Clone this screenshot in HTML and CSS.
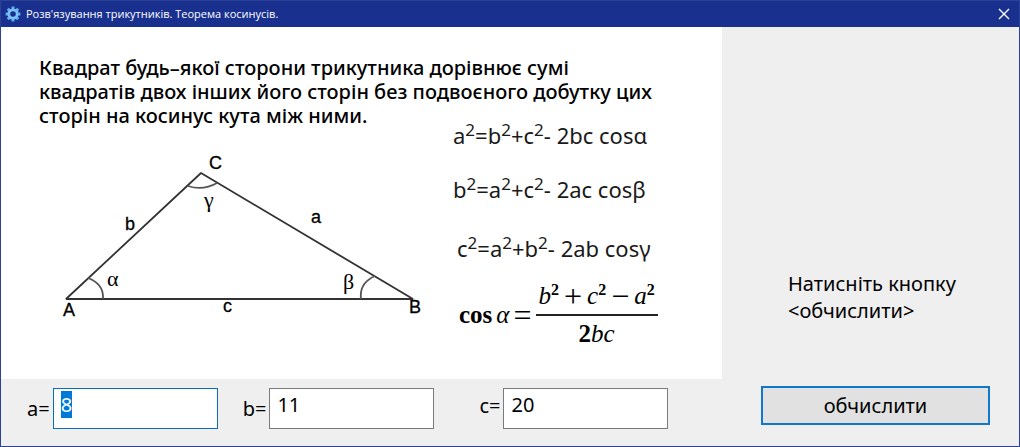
FILE: index.html
```html
<!DOCTYPE html>
<html lang="uk">
<head>
<meta charset="utf-8">
<title>Розв'язування трикутників. Теорема косинусів.</title>
<link rel="stylesheet" href="styles.css">
</head>
<body>
<div class="window">
  <header class="titlebar">
    <svg class="gear" viewBox="0 0 16 16" aria-hidden="true">
      <path d="M8 .6v2.6M8 12.8v2.6M.6 8h2.6M12.8 8h2.6M2.8 2.8l1.8 1.8M11.4 11.4l1.8 1.8M2.8 13.2l1.8-1.8M11.4 4.6l1.8-1.8" stroke="#5aaef0" stroke-width="3"/>
      <circle cx="8" cy="8" r="4.2" fill="none" stroke="#7cc0f5" stroke-width="2.8"/>
    </svg>
    <h1 class="title">Розв'язування трикутників. Теорема косинусів.</h1>
    <button class="close" type="button" aria-label="Закрити">
      <svg viewBox="0 0 10 10" aria-hidden="true"><path d="M0 0L10 10M10 0L0 10" stroke="#fff" stroke-width="1.4"/></svg>
    </button>
  </header>
  <form class="content">
    <main class="main">
      <section class="theory">
        <p class="theorem">Квадрат будь–якої сторони трикутника дорівнює сумі<br>квадратів двох інших його сторін без подвоєного добутку цих<br>сторін на косинус кута між ними.</p>
        <div class="columns">
          <svg class="triangle" viewBox="0 0 370 180" role="img" aria-label="Трикутник ABC">
            <g fill="none" stroke="#333" stroke-width="1.8">
              <path d="M6 151L141 25L353 151Z" stroke-linejoin="bevel"/>
              <path d="M28 130Q44 136 43 151M128 38Q143 43 157 35M315 128Q299 135 301 151" stroke="#555"/>
            </g>
            <g class="names">
              <text x="3" y="168">A</text>
              <text x="149" y="21">C</text>
              <text x="349" y="165">B</text>
              <text x="251" y="75">a</text>
              <text x="65" y="82">b</text>
              <text x="163" y="164">c</text>
            </g>
            <g class="angles">
              <text x="47" y="138">α</text>
              <text x="283" y="141">β</text>
              <text x="144" y="59">γ</text>
            </g>
          </svg>
          <div class="formulas">
            <p>a<sup>2</sup>=b<sup>2</sup>+c<sup>2</sup>- 2bc cosα</p>
            <p>b<sup>2</sup>=a<sup>2</sup>+c<sup>2</sup>- 2ac cosβ</p>
            <p class="third">c<sup>2</sup>=a<sup>2</sup>+b<sup>2</sup>- 2ab cosγ</p>
            <div class="cosine">
              <b>cos</b> <i>α</i> <span class="sign">=</span>
              <span class="fraction">
                <span class="top"><span><i>b</i><sup>2</sup></span> <span class="sign">+</span> <span><i>c</i><sup>2</sup></span> <span class="sign">−</span> <span><i>a</i><sup>2</sup></span></span>
                <span class="bottom"><b>2</b><i>bc</i></span>
              </span>
            </div>
          </div>
        </div>
      </section>
      <div class="fields">
        <div class="field"><label for="a">a=</label><input id="a" type="text" value="8"></div>
        <div class="field"><label for="b">b=</label><input id="b" type="text" value="11"></div>
        <div class="field"><label for="c">c=</label><input id="c" type="text" value="20"></div>
      </div>
    </main>
    <aside class="side">
      <output class="message" for="a b c">Натисніть кнопку<br>&lt;обчислити&gt;</output>
      <button class="calculate" type="button">обчислити</button>
    </aside>
  </form>
</div>
<script src="script.js"></script>
</body>
</html>
```
FILE: styles.css
```css
* { box-sizing: border-box; }

body {
  margin: 0;
  background: #efefef;
  color: #000;
  font-family: "Noto Sans", "Open Sans", sans-serif;
  font-size: 20px;
}

p, h1 { margin: 0; }

button, input { font: inherit; color: inherit; }

.window {
  display: flex;
  flex-direction: column;
  min-height: 100vh;
  border: 1px solid #2a4397;
}

.titlebar {
  display: flex;
  align-items: center;
  gap: 5px;
  height: 26px;
  padding: 0 5px 0 4px;
  background: #19308f;
  color: #fff;
}

.gear { width: 16px; height: 16px; }

.title {
  flex: 1;
  font-family: "Open Sans", sans-serif;
  font-size: 11px;
  font-weight: 500;
  line-height: 16px;
}

.close {
  display: flex;
  padding: 5px;
  border: 0;
  background: none;
}

.close svg { width: 10px; height: 10px; overflow: visible; }

.content {
  flex: 1;
  display: grid;
  grid-template-columns: minmax(0, 1fr) 297px;
}

.main { display: flex; flex-direction: column; }

.theory {
  flex: 1;
  padding: 29px 38px 0;
  background: #fff;
}

.theorem {
  font-weight: 500;
  line-height: 24px;
  white-space: nowrap;
}

.columns {
  display: flex;
  gap: 23px;
  padding-left: 21px;
}

.triangle { flex: none; width: 370px; height: 180px; margin-top: 20px; }

.names {
  font-family: "Liberation Sans", Arial, sans-serif;
  font-size: 18px;
  stroke: #000;
  stroke-width: 0.3px;
}

.angles {
  font-family: "Liberation Serif", "Times New Roman", serif;
  font-size: 22px;
}

.formulas {
  color: #1a1a1a;
  font-size: 22px;
  line-height: 14px;
  white-space: nowrap;
}

.formulas p { margin-bottom: 40px; }
.formulas p:nth-child(2) { margin-bottom: 45px; }
.formulas .third { margin-bottom: 27px; padding-left: 4px; }

sup { font-size: 17px; line-height: 0; }

.cosine {
  display: flex;
  align-items: center;
  gap: 4px;
  padding-left: 6px;
  color: #000;
  font-family: "Liberation Serif", "Times New Roman", serif;
  font-size: 25px;
}

.cosine sup { font-size: 16px; font-weight: 700; }

.sign { font-size: 32px; }

.fraction { display: flex; flex-direction: column; text-align: center; }

.top {
  display: flex;
  align-items: center;
  gap: 5px;
  height: 34px;
  padding: 0 3px 4px;
  border-bottom: 2px solid #222;
}

.bottom { padding-top: 4px; line-height: 28px; }

.fields {
  display: flex;
  gap: 25px;
  padding: 9px 26px 17px;
}

.field { display: flex; gap: 3px; }

.field:last-child { margin-left: 20px; }

.field label { padding-top: 8px; line-height: 26px; }

.field:last-child label { padding-top: 5px; }

.field input {
  width: 165px;
  height: 41px;
  padding: 0 7px 8px;
  border: 1px solid #7a7a7a;
  background: #fff;
  outline: 0;
}

.field input:focus { border-color: #0a6cbd; }

.field input::selection { background: #0078d7; color: #fff; }

.side {
  display: flex;
  flex-direction: column;
  justify-content: flex-end;
  gap: 62px;
  padding: 0 29px 21px 39px;
}

.message { padding-left: 27px; line-height: 27px; }

.calculate {
  height: 39px;
  border: 2px solid #1177c8;
  background: #e1e1e1;
}
```
FILE: script.js
```javascript
const first = document.getElementById("a");
first.focus();
first.select();
```
